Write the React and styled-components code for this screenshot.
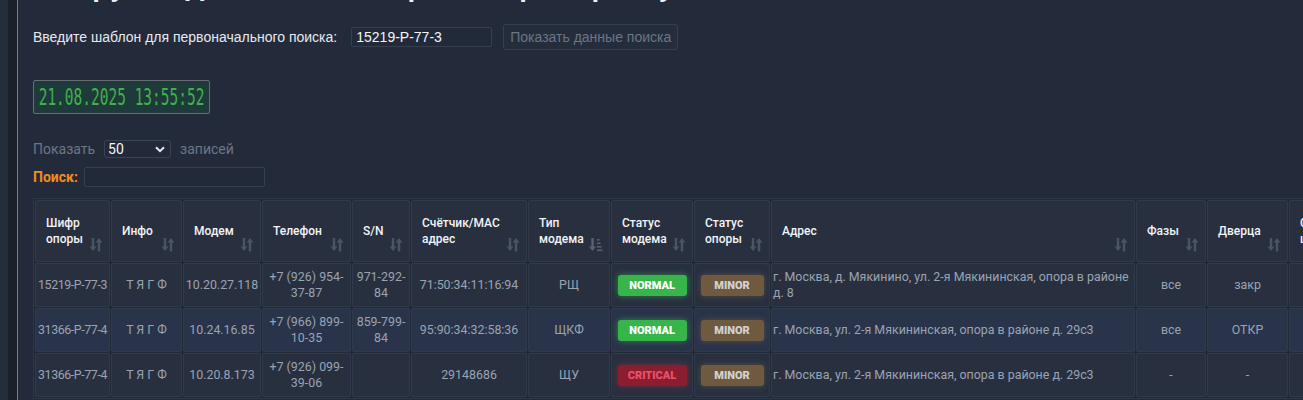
import React from 'react';
import styled, { createGlobalStyle } from 'styled-components';

const Global = createGlobalStyle`
  *, *::before, *::after { box-sizing: border-box; }
  html, body { margin: 0; padding: 0; overflow: hidden; background: #232b3b; }
  body { font-family: Roboto, "Liberation Sans", Arial, sans-serif; }
`;

const Shell = styled.div`
  display: flex;
  height: 400px;
  overflow: hidden;
`;
const Rail = styled.div`
  flex: none;
  width: 8px;
  background: #252d3b;
`;
const Gutter = styled.div`
  flex: none;
  width: 9px;
  background: #1b2029;
`;
const Main = styled.main`
  flex: 1;
  min-width: 0;
  border-left: 1px solid #2d8cf0;
  padding-left: 15px;
  overflow: hidden;
  display: flex;
  flex-direction: column;
  align-items: flex-start;
`;
const Title = styled.h2`
  margin: -33px 0 0 0;
  height: 36px;
  font-size: 32px;
  line-height: 36px;
  font-weight: 500;
  color: #eef1f5;
  white-space: nowrap;
`;
const SearchRow = styled.div`
  display: flex;
  align-items: center;
  margin-top: 21px;
  height: 26px;
`;
const Label = styled.label`
  font-size: 14px;
  color: #e6e9ee;
  font-family: "Liberation Sans", Arial, sans-serif;
`;
const TextInput = styled.input`
  width: ${p => p.$w}px;
  height: 20px;
  margin-left: ${p => p.$ml}px;
  background: #222a3a;
  border: 1px solid #363f4f;
  border-radius: 2px;
  color: #f3f5f8;
  font-size: 14px;
  font-family: "Liberation Sans", Arial, sans-serif;
  padding: 0 4px;
  outline: none;
`;
const GhostButton = styled.button`
  margin-left: 11px;
  width: 175px;
  height: 26px;
  background: #252d3d;
  border: 1px solid #363f4e;
  border-radius: 3px;
  color: #6b7585;
  font-size: 14px;
  font-family: "Liberation Sans", Arial, sans-serif;
  padding: 0;
`;
const Clock = styled.div`
  margin-top: 30px;
  width: 177px;
  height: 34px;
  background: #1e3a3a;
  border: 1px solid #676d73;
  border-radius: 2px;
  display: flex;
  align-items: center;
  justify-content: center;
  overflow: hidden;
`;
const ClockText = styled.span`
  display: inline-block;
  font-family: "DejaVu Sans Mono", "Liberation Mono", monospace;
  font-size: 23px;
  color: #3fb24c;
  white-space: pre;
  transform: scaleX(0.63);
`;
const LengthRow = styled.div`
  margin-top: 26px;
  display: flex;
  align-items: center;
  height: 18px;
  font-size: 14px;
  color: #6d7686;
`;
const FakeSelect = styled.div`
  margin: 0 9px;
  width: 67px;
  height: 18px;
  background: #222a3a;
  border: 1px solid #3a4352;
  border-radius: 3px;
  color: #f3f5f8;
  display: flex;
  align-items: center;
  justify-content: space-between;
  padding: 0 5px 0 3px;
  font-size: 14px;
`;
const FilterRow = styled.div`
  margin-top: 9px;
  display: flex;
  align-items: center;
  height: 20px;
`;
const FilterLabel = styled.span`
  font-size: 14px;
  font-weight: 700;
  color: #f28a1c;
  margin-right: 6px;
`;
const TableWrap = styled.div`
  margin-top: 11px;
`;
const Table = styled.table`
  table-layout: fixed;
  border-collapse: separate;
  border-spacing: 1px;
  border: 1px solid #2e3746;
  background: #222937;
  width: ${p => p.$w}px;
`;
const Th = styled.th`
  position: relative;
  width: ${p => p.$w}px;
  height: 62px;
  padding: 0 22px 0 10px;
  background: #282f3f;
  border: 1px solid #313a4a;
  border-radius: 2px;
  text-align: left;
  vertical-align: middle;
  color: #f2f4f7;
  font-size: 12px;
  font-weight: 500;
  line-height: 16px;
`;
const SortIcon = styled.svg`
  position: absolute;
  right: 6px;
  bottom: 9px;
`;
const Tr = styled.tr`
  background: ${p => (p.$alt ? '#29334a' : '#283040')};
`;
const Td = styled.td`
  height: 44px;
  padding: 0 1px;
  background: inherit;
  border: 1px solid #313a4a;
  border-radius: 2px;
  text-align: ${p => (p.$left ? 'left' : 'center')};
  vertical-align: middle;
  color: #9aa3b1;
  font-size: 12.4px;
  line-height: 16px;
  white-space: ${p => (p.$tight ? 'nowrap' : 'normal')};
  letter-spacing: ${p => (p.$tight ? '-0.4px' : '0')};
`;
const tones = {
  normal: { bg: '#37b44a', fg: '#ffffff', glow: 'rgba(60,200,80,0.55)', w: 69 },
  critical: { bg: '#8a1e30', fg: '#ea5068', glow: 'rgba(210,40,60,0.5)', w: 69 },
  minor: { bg: '#6f5a3f', fg: '#d2d2d2', glow: 'rgba(140,110,70,0.5)', w: 63 },
};
const Badge = styled.span`
  display: inline-block;
  width: ${p => tones[p.$tone].w}px;
  height: 21px;
  line-height: 21px;
  border-radius: 3px;
  background: ${p => tones[p.$tone].bg};
  color: ${p => tones[p.$tone].fg};
  box-shadow: 0 0 6px ${p => tones[p.$tone].glow};
  font-size: 11px;
  font-weight: 900;
  letter-spacing: 0;
  text-align: center;
`;

const SortBoth = () => (
  <SortIcon width="14" height="15" viewBox="0 0 14 15">
    <g fill="#4b5464">
      <rect x="2.8" y="1" width="2.4" height="10" />
      <polygon points="0.5,9.5 7.5,9.5 4,14" />
      <rect x="8.8" y="4" width="2.4" height="10.5" />
      <polygon points="6.5,5.5 13.5,5.5 10,1" />
    </g>
  </SortIcon>
);
const SortDown = () => (
  <SortIcon width="14" height="15" viewBox="0 0 14 15">
    <g fill="#59616f">
      <rect x="2.3" y="1" width="2.4" height="10" />
      <polygon points="0,9.5 7,9.5 3.5,14" />
      <rect x="8" y="2" width="2.5" height="1.6" />
      <rect x="8" y="5.5" width="3.5" height="1.6" />
      <rect x="8" y="9" width="4.5" height="1.6" />
      <rect x="8" y="12.5" width="5.5" height="1.6" />
    </g>
  </SortIcon>
);

const columns = [
  { label: 'Шифр опоры', w: 75 },
  { label: 'Инфо', w: 71 },
  { label: 'Модем', w: 78 },
  { label: 'Телефон', w: 89 },
  { label: 'S/N', w: 58 },
  { label: 'Счётчик/MAC адрес', w: 116 },
  { label: 'Тип модема', w: 82, sorted: true },
  { label: 'Статус модема', w: 82 },
  { label: 'Статус опоры', w: 76 },
  { label: 'Адрес', w: 364 },
  { label: 'Фазы', w: 70 },
  { label: 'Дверца', w: 81 },
  { label: 'Статус шкафа', w: 110 },
];

const rows = [
  ['15219-Р-77-3', 'Т Я Г Ф', '10.20.27.118', '+7 (926) 954-37-87', '971-292-84', '71:50:34:11:16:94', 'РЩ', 'normal', 'minor', 'г. Москва, д. Мякинино, ул. 2-я Мякининская, опора в районе д. 8', 'все', 'закр', ''],
  ['31366-Р-77-4', 'Т Я Г Ф', '10.24.16.85', '+7 (966) 899-10-35', '859-799-84', '95:90:34:32:58:36', 'ЩКФ', 'normal', 'minor', 'г. Москва, ул. 2-я Мякининская, опора в районе д. 29с3', 'все', 'ОТКР', ''],
  ['31366-Р-77-4', 'Т Я Г Ф', '10.20.8.173', '+7 (926) 099-39-06', '', '29148686', 'ЩУ', 'critical', 'minor', 'г. Москва, ул. 2-я Мякининская, опора в районе д. 29с3', '-', '-', ''],
];

const tableWidth = columns.reduce((s, c) => s + c.w, 0) + columns.length + 1 + 2;

export default function App() {
  return (
    <>
      <Global />
      <Shell>
        <Rail />
        <Gutter />
        <Main>
          <Title>Выгрузка данных по опорам и приборам учёта</Title>
          <SearchRow>
            <Label>Введите шаблон для первоначального поиска:</Label>
            <TextInput $w={141} $ml={14} defaultValue="15219-Р-77-3" />
            <GhostButton>Показать данные поиска</GhostButton>
          </SearchRow>
          <Clock>
            <ClockText>21.08.2025 13:55:52</ClockText>
          </Clock>
          <LengthRow>
            <span>Показать</span>
            <FakeSelect>
              <span>50</span>
              <svg width="10" height="7" viewBox="0 0 10 7">
                <path d="M1 1.2 L5 5.2 L9 1.2" stroke="#e6e9ee" strokeWidth="2" fill="none" />
              </svg>
            </FakeSelect>
            <span>записей</span>
          </LengthRow>
          <FilterRow>
            <FilterLabel>Поиск:</FilterLabel>
            <TextInput $w={181} $ml={0} />
          </FilterRow>
          <TableWrap>
            <Table $w={tableWidth}>
              <thead>
                <tr>
                  {columns.map(c => (
                    <Th key={c.label} $w={c.w}>
                      {c.label}
                      {c.sorted ? <SortDown /> : <SortBoth />}
                    </Th>
                  ))}
                </tr>
              </thead>
              <tbody>
                {rows.map((r, i) => (
                  <Tr key={i} $alt={i === 1}>
                    {r.map((v, j) => (
                      <Td key={j} $left={j === 9} $tight={j === 0}>
                        {j === 7 || j === 8 ? <Badge $tone={v}>{v.toUpperCase()}</Badge> : v}
                      </Td>
                    ))}
                  </Tr>
                ))}
              </tbody>
            </Table>
          </TableWrap>
        </Main>
      </Shell>
    </>
  );
}
